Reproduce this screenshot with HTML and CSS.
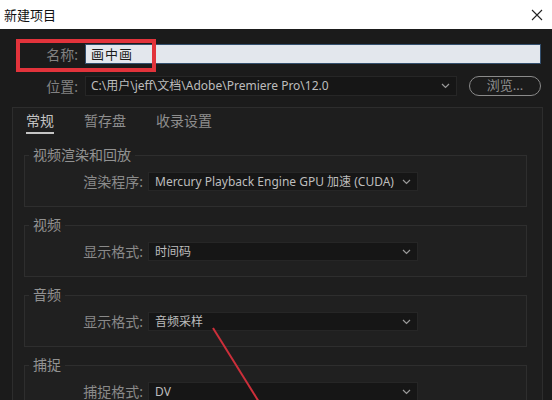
FILE: index.html
```html
<!doctype html>
<html lang="zh-CN">
<head>
<meta charset="utf-8">
<title>新建项目</title>
<link rel="stylesheet" href="styles.css">
</head>
<body>
<div class="titlebar">
  <span>新建项目</span>
  <svg class="close" width="12" height="12" viewBox="0 0 12 12"><path d="M1 1L11 11M11 1L1 11" stroke="#222" stroke-width="1.1" fill="none"/></svg>
</div>

<div class="dialog">
  <div class="row">
    <label>名称:</label>
    <div class="name-input">画中画</div>
  </div>
  <div class="row loc">
    <label>位置:</label>
    <div class="select path">C:\用户\jeff\文档\Adobe\Premiere Pro\12.0<svg class="chev" width="9" height="6" viewBox="0 0 9 6"><path d="M1 1L4.5 4.5L8 1" stroke="#9a9a9a" stroke-width="1.2" fill="none"/></svg></div>
    <div class="browse">浏览...</div>
  </div>

  <div class="panel">
    <div class="tabs">
      <span class="tab active">常规</span>
      <span class="tab">暂存盘</span>
      <span class="tab">收录设置</span>
    </div>

    <fieldset class="group">
      <legend>视频渲染和回放</legend>
      <div class="field">
        <label>渲染程序:</label>
        <div class="select">Mercury Playback Engine GPU 加速 (CUDA)<svg class="chev" width="9" height="6" viewBox="0 0 9 6"><path d="M1 1L4.5 4.5L8 1" stroke="#9a9a9a" stroke-width="1.2" fill="none"/></svg></div>
      </div>
    </fieldset>

    <fieldset class="group">
      <legend>视频</legend>
      <div class="field">
        <label>显示格式:</label>
        <div class="select">时间码<svg class="chev" width="9" height="6" viewBox="0 0 9 6"><path d="M1 1L4.5 4.5L8 1" stroke="#9a9a9a" stroke-width="1.2" fill="none"/></svg></div>
      </div>
    </fieldset>

    <fieldset class="group">
      <legend>音频</legend>
      <div class="field">
        <label>显示格式:</label>
        <div class="select">音频采样<svg class="chev" width="9" height="6" viewBox="0 0 9 6"><path d="M1 1L4.5 4.5L8 1" stroke="#9a9a9a" stroke-width="1.2" fill="none"/></svg></div>
      </div>
    </fieldset>

    <fieldset class="group">
      <legend>捕捉</legend>
      <div class="field">
        <label>捕捉格式:</label>
        <div class="select">DV<svg class="chev" width="9" height="6" viewBox="0 0 9 6"><path d="M1 1L4.5 4.5L8 1" stroke="#9a9a9a" stroke-width="1.2" fill="none"/></svg></div>
      </div>
    </fieldset>
  </div>
</div>

<!-- annotation overlays -->
<div class="mark-box"></div>
<svg class="mark-line" width="552" height="400" viewBox="0 0 552 400"><line x1="213" y1="328" x2="259" y2="402" stroke="#cc2f3a" stroke-width="2"/></svg>
</body>
</html>
```

FILE: styles.css
```css
html,body{margin:0;padding:0;}
body{
  width:552px;
  height:400px;
  overflow:hidden;
  position:relative;
  background:#1b1b1b;
  font-family:"Noto Sans","Noto Sans CJK SC",sans-serif;
}

.titlebar{
  height:29px;
  background:#fff;
  display:flex;
  align-items:center;
  justify-content:space-between;
  padding:0 8px 0 4px;
  font-size:13px;
  color:#111;
  box-sizing:border-box;
}
.close{margin-right:1px;}

.dialog{
  background:#1b1b1b;
  padding-top:15px;
}

.row{
  display:flex;
  align-items:center;
  height:20px;
}
.row label{
  width:78px;
  margin-right:7px;
  text-align:right;
  font-size:14px;
  color:#828282;
}
.row.loc{margin-top:12px;}

.name-input{
  width:456px;
  height:20px;
  box-sizing:border-box;
  background:#e3e7ed;
  border:1px solid #34506e;
  color:#1a1a1a;
  font-size:13px;
  line-height:18px;
  padding-left:5px;
  letter-spacing:1px;
}

.select{
  position:relative;
  height:19px;
  box-sizing:border-box;
  background:#161616;
  border:1px solid #262626;
  color:#bdbdbd;
  font-size:12px;
  line-height:17px;
  padding-left:6px;
  white-space:nowrap;
}
.select .chev{
  position:absolute;
  right:6px;
  top:6px;
}
.select.path{
  width:372px;
  height:20px;
  line-height:18px;
  padding-left:5px;
}

.browse{
  width:72px;
  height:20px;
  box-sizing:border-box;
  margin-left:12px;
  border:1.5px solid #8a8a8a;
  border-radius:10px;
  color:#8e8e8e;
  font-size:13px;
  line-height:17px;
  text-align:center;
}

.panel{
  margin:11px 0 0 12px;
  width:531px;
  height:400px;
  box-sizing:border-box;
  border:1px solid #2d2d2d;
  background:#1e1e1e;
}

.tabs{
  display:flex;
  gap:30px;
  padding:4px 0 0 13px;
}
.tab{
  font-size:14px;
  line-height:18px;
  color:#8e8e8e;
  padding-bottom:2px;
}
.tab.active{
  color:#c4c4c4;
  border-bottom:2px solid #c4c4c4;
}

.group{
  margin:9px 0 0 11px;
  width:503px;
  box-sizing:border-box;
  border:1px solid #2e2e2e;
  background:#202020;
  padding:7px 0 15px 0;
}
.group:first-of-type{margin-top:12px;}
.group legend{
  margin-left:4px;
  padding:0 4px;
  font-size:14px;
  line-height:18px;
  color:#929292;
}

.field{
  display:flex;
  align-items:center;
}
.field label{
  width:118px;
  margin-right:5px;
  text-align:right;
  font-size:14px;
  color:#8a8a8a;
}
.field .select{width:270px;}

.mark-box{
  position:absolute;
  left:16px;
  top:39px;
  width:140px;
  height:33px;
  box-sizing:border-box;
  border:4px solid #e2333b;
}
.mark-line{
  position:absolute;
  left:0;
  top:0;
}
```
